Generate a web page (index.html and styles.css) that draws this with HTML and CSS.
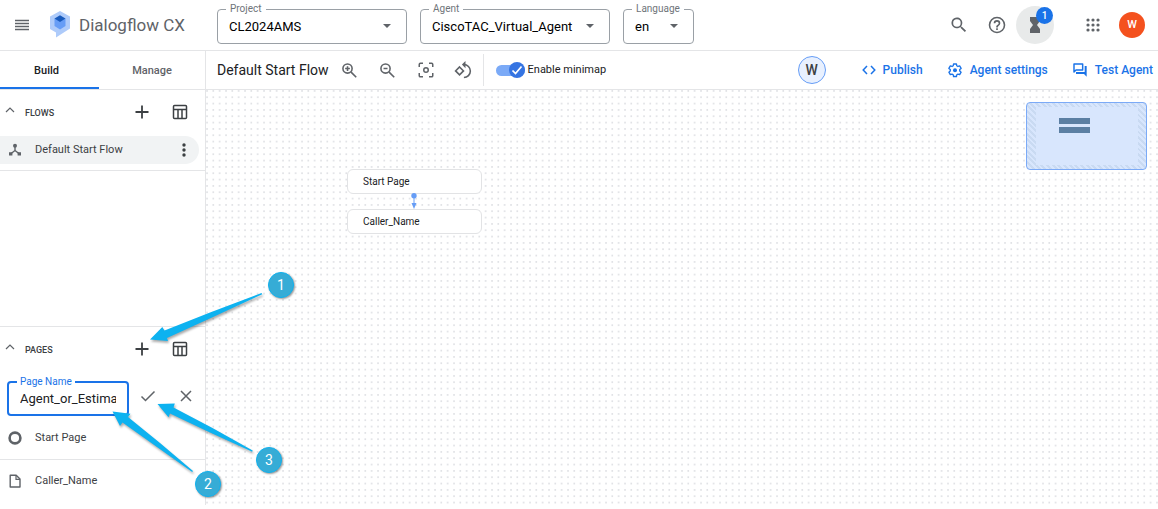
FILE: index.html
```html
<!DOCTYPE html>
<html lang="en">
<head>
<meta charset="utf-8">
<title>Dialogflow CX</title>
<link rel="stylesheet" href="styles.css">
</head>
<body>
<header class="topbar">
  <button class="icon-btn menu-btn" aria-label="Main menu"><svg width="16" height="12" viewBox="0 0 16 12"><path d="M1 1.500h14M1 4.500h14M1 7.500h14M1 10.500h14" stroke="#5f6368" stroke-width="1.400"/></svg></button>
  <a class="brand" href="#">
    <svg width="22" height="28" viewBox="0 0 22 28"><path d="M11 0 21 5.500V17.500L7 26.500V21.500L1 18V5.500Z" fill="#aecbfa"/><path d="M11 9 16.500 7.500V15L11 18.500 5.500 15V7.500Z" fill="#669df6"/><path d="M11 4.200 16.500 7.500 11 11 5.500 7.500Z" fill="#185abc"/></svg>
    <span>Dialogflow CX</span>
  </a>
  <div class="selectors">
    <fieldset class="field project"><legend><label for="project">Project</label></legend>
      <select id="project"><option>CL2024AMS</option></select><svg class="caret" width="8" height="4" viewBox="0 0 8 4"><path d="M0 0h8L4 4z"/></svg></fieldset>
    <fieldset class="field agent"><legend><label for="agent">Agent</label></legend>
      <select id="agent"><option>CiscoTAC_Virtual_Agent</option></select><svg class="caret" width="8" height="4" viewBox="0 0 8 4"><path d="M0 0h8L4 4z"/></svg></fieldset>
    <fieldset class="field language"><legend><label for="language">Language</label></legend>
      <select id="language"><option>en</option></select><svg class="caret" width="8" height="4" viewBox="0 0 8 4"><path d="M0 0h8L4 4z"/></svg></fieldset>
  </div>
  <div class="top-actions">
    <button class="icon-btn" aria-label="Search"><svg width="20" height="20" viewBox="0 0 24 24"><path fill="#5f6368" d="M15.500 14h-.8l-.3-.3A6.500 6.500 0 1 0 13.700 14.400l.3.3v.8l5 5 1.500-1.500-5-5zm-6 0a4.500 4.500 0 1 1 0-9 4.500 4.500 0 0 1 0 9z"/></svg></button>
    <button class="icon-btn" aria-label="Help"><svg width="20" height="20" viewBox="0 0 24 24"><circle cx="12" cy="12" r="9" fill="none" stroke="#5f6368" stroke-width="1.900"/><path fill="#5f6368" d="M11 16h2v2h-2zM12 6a4 4 0 0 0-4 4h2a2 2 0 1 1 4 0c0 2-3 1.750-3 5h2c0-2.250 3-2.500 3-5a4 4 0 0 0-4-4z"/></svg></button>
    <button class="icon-btn jobs" aria-label="Operations"><svg width="12" height="18" viewBox="0 0 12 18"><path fill="#5f6368" d="M1 1h10v4L8 9l3 4v4H1v-4l3-4-3-4z"/></svg><span class="count">1</span></button>
    <button class="icon-btn apps" aria-label="Google apps"><svg width="14" height="14" viewBox="0 0 14 14"><path d="M2 2h.01M7 2h.01M12 2h.01M2 7h.01M7 7h.01M12 7h.01M2 12h.01M7 12h.01M12 12h.01" stroke="#5f6368" stroke-width="3.200" stroke-linecap="round"/></svg></button>
    <button class="account" aria-label="Account">W</button>
  </div>
</header>

<div class="workspace">
  <aside class="sidebar">
    <nav class="tabs"><a class="tab active" href="#">Build</a><a class="tab" href="#">Manage</a></nav>
    <section class="flows">
      <div class="section-head">
        <button class="icon-btn chevron" aria-label="Collapse flows"><svg width="10" height="6" viewBox="0 0 10 6"><path d="M1 5l4-4 4 4" fill="none" stroke="#5f6368" stroke-width="1.200"/></svg></button>
        <h2>FLOWS</h2>
        <button class="icon-btn" aria-label="Create flow"><svg width="14" height="14" viewBox="0 0 14 14"><path d="M7 .5v13M.5 7h13" stroke="#3c4043" stroke-width="1.800"/></svg></button>
        <button class="icon-btn" aria-label="Flow table"><svg width="16" height="16" viewBox="0 0 16 16"><rect x="1.500" y="1.500" width="13" height="13" rx="1" fill="none" stroke="#3c4043" stroke-width="1.500"/><path d="M1 5.500h14M6 5.500v9M10 5.500v9" stroke="#3c4043" stroke-width="1.500"/></svg></button>
      </div>
      <div class="row selected">
        <svg class="row-icon" width="14" height="14" viewBox="0 0 14 14"><path d="M7 3v4.500L2.500 11M7 7.500l4.500 3.500" fill="none" stroke="#5f6368" stroke-width="1.400"/><circle cx="7" cy="2.700" r="2" fill="#5f6368"/><path d="M1 9.200h3.400v3.400H1zM9.600 9.200H13v3.400H9.600z" fill="#5f6368"/></svg>
        <a href="#">Default Start Flow</a>
        <button class="icon-btn" aria-label="More"><svg width="4" height="14" viewBox="0 0 4 14"><g fill="#3c4043"><circle cx="2" cy="2" r="1.700"/><circle cx="2" cy="7" r="1.700"/><circle cx="2" cy="12" r="1.700"/></g></svg></button>
      </div>
    </section>
    <section class="pages">
      <div class="section-head">
        <button class="icon-btn chevron" aria-label="Collapse pages"><svg width="10" height="6" viewBox="0 0 10 6"><path d="M1 5l4-4 4 4" fill="none" stroke="#5f6368" stroke-width="1.200"/></svg></button>
        <h2>PAGES</h2>
        <button class="icon-btn" aria-label="Create page"><svg width="14" height="14" viewBox="0 0 14 14"><path d="M7 .5v13M.5 7h13" stroke="#3c4043" stroke-width="1.800"/></svg></button>
        <button class="icon-btn" aria-label="Page table"><svg width="16" height="16" viewBox="0 0 16 16"><rect x="1.500" y="1.500" width="13" height="13" rx="1" fill="none" stroke="#3c4043" stroke-width="1.500"/><path d="M1 5.500h14M6 5.500v9M10 5.500v9" stroke="#3c4043" stroke-width="1.500"/></svg></button>
      </div>
      <form class="new-page">
        <fieldset class="field page-name"><legend><label for="page-name">Page Name</label></legend><input id="page-name" type="text" value="Agent_or_Estimate"></fieldset>
        <button type="button" class="icon-btn" aria-label="Save"><svg width="16" height="12" viewBox="0 0 16 12"><path d="M1.500 6.500l4 4L14.500 1.500" fill="none" stroke="#5f6368" stroke-width="1.500"/></svg></button>
        <button type="button" class="icon-btn" aria-label="Cancel"><svg width="12" height="12" viewBox="0 0 12 12"><path d="M1 1l10 10M11 1L1 11" stroke="#5f6368" stroke-width="1.500"/></svg></button>
      </form>
      <div class="row start">
        <svg class="row-icon" width="14" height="14" viewBox="0 0 14 14"><circle cx="7" cy="7" r="5.400" fill="none" stroke="#5f6368" stroke-width="2.600"/></svg>
        <a href="#">Start Page</a>
      </div>
      <div class="row">
        <svg class="row-icon" width="14" height="14" viewBox="0 0 14 14"><path d="M2.200 1.200h6L12 5v8H2.200z" fill="none" stroke="#5f6368" stroke-width="1.400" stroke-linejoin="round"/><path d="M8 1v4.300h4" fill="none" stroke="#5f6368" stroke-width="1.200"/></svg>
        <a href="#">Caller_Name</a>
      </div>
    </section>
  </aside>

  <main class="main">
    <div class="toolbar">
      <h1>Default Start Flow</h1>
      <div class="view-tools">
        <button class="icon-btn" aria-label="Zoom in"><svg width="19" height="19" viewBox="0 0 24 24"><circle cx="9.500" cy="9.500" r="5.800" fill="none" stroke="#5f6368" stroke-width="2"/><path d="M14 14l6.500 6.500M9.500 6.500v6M6.500 9.500h6" stroke="#5f6368" stroke-width="2"/></svg></button>
        <button class="icon-btn" aria-label="Zoom out"><svg width="19" height="19" viewBox="0 0 24 24"><circle cx="9.500" cy="9.500" r="5.800" fill="none" stroke="#5f6368" stroke-width="2"/><path d="M14 14l6.500 6.500M7 9.500h5" stroke="#5f6368" stroke-width="2"/></svg></button>
        <button class="icon-btn" aria-label="Center view"><svg width="18" height="18" viewBox="0 0 24 24"><g fill="none" stroke="#5f6368" stroke-width="2"><circle cx="12" cy="12" r="3"/><path d="M3 8V4.500Q3 3 4.500 3H8M16 3h3.500Q21 3 21 4.500V8M21 16v3.500q0 1.500-1.500 1.500H16M8 21H4.500Q3 21 3 19.500V16"/></g></svg></button>
        <button class="icon-btn" aria-label="Reset layout"><svg width="19" height="19" viewBox="0 0 24 24"><g fill="none" stroke="#5f6368" stroke-width="2"><path d="M7 7.500l5 5-5 5-5-5z"/><path d="M12.500 4.500a8 8 0 1 1 0 16.300"/></g><path d="M14.500 0v9L10 4.500z" fill="#5f6368"/></svg></button>
      </div>
      <label class="toggle"><input type="checkbox" role="switch" checked><span class="track"><span class="knob"><svg width="12" height="12" viewBox="0 0 12 12"><path d="M1.500 6.500l3 3 6-7" fill="none" stroke="#fff" stroke-width="1.700"/></svg></span></span>Enable minimap</label>
      <div class="agent-actions">
        <button class="presence" aria-label="Collaborator">W</button>
        <button class="action publish"><svg width="14" height="16" viewBox="0 0 14 16"><path d="M5 4L1.200 8 5 12M9 4l3.800 4L9 12" fill="none" stroke="#1a73e8" stroke-width="1.500"/></svg>Publish</button>
        <button class="action"><svg width="16" height="16" viewBox="0 0 24 24"><path d="M9.800 3h4.400l.5 2.700 1.700 1 2.600-.9 2.200 3.800-2.100 1.800v2l2.100 1.800-2.200 3.800-2.600-.9-1.700 1-.5 2.700H9.800l-.5-2.700-1.700-1-2.600.9-2.200-3.800 2.100-1.800v-2L2.800 9.600 5 5.800l2.600.9 1.700-1z" fill="none" stroke="#1a73e8" stroke-width="2" stroke-linejoin="round"/><circle cx="12" cy="12.300" r="3" fill="#1a73e8"/></svg>Agent settings</button>
        <button class="action"><svg width="16" height="16" viewBox="0 0 24 24"><path d="M3 3h13v9H6l-3 3z" fill="none" stroke="#1a73e8" stroke-width="2.200" stroke-linejoin="round"/><path d="M19 6h3v16l-4-4H6v-3h13z" fill="#1a73e8"/></svg>Test Agent</button>
      </div>
    </div>
    <div class="canvas">
      <svg class="grid" width="100%" height="100%"><defs><pattern id="dots" width="6.333" height="6.333" patternUnits="userSpaceOnUse"><circle cx="1" cy="1" r=".9" fill="#dadce0"/></pattern></defs><rect width="100%" height="100%" fill="url(#dots)"/></svg>
      <div class="node node-start">Start Page</div>
      <svg class="link" width="8" height="16" viewBox="0 0 8 16"><circle cx="4" cy="2.800" r="2.700" fill="#669df6"/><path d="M4 3v8" stroke="#669df6" stroke-width="1"/><path d="M1.500 10h5L4 16z" fill="#669df6"/></svg>
      <div class="node node-caller">Caller_Name</div>
      <div class="minimap"><span class="mini-node"></span><span class="mini-node"></span></div>
    </div>
  </main>
</div>

<svg class="arrows" width="310" height="500" viewBox="0 0 310 500">
  <g fill="#0db2f0">
    <path d="M150 339.500 162.300 327 164.500 330.500 210 312.500 261.500 293 262.300 294.200 212 317.500 167 338 168 341Z"/>
    <path d="M112.500 411.500 130.500 413.800 128 417 160 443 193 471 192.200 472 157 447 122.500 422.500 120 426Z"/>
    <path d="M157.500 404 174.800 403.500 173.500 407.500 212 427.800 252.700 450.500 252.200 451.700 210 432.500 170 413.500 168.500 417.300Z"/>
  </g>
</svg>
<span class="step step-1">1</span>
<span class="step step-2">2</span>
<span class="step step-3">3</span>
</body>
</html>
```
FILE: styles.css
```css
* { box-sizing: border-box; }

body {
  margin: 0;
  min-height: 100vh;
  padding-bottom: 4px;
  display: flex;
  flex-direction: column;
  position: relative;
  overflow: hidden;
  background: #fff;
  color: #3c4043;
  font-family: Roboto, "Liberation Sans", sans-serif;
  font-size: 11px;
  line-height: 16px;
}

button, select, input { font: inherit; color: inherit; }
button { padding: 0; border: 0; background: none; cursor: pointer; }
a { color: inherit; text-decoration: none; }
h1, h2 { margin: 0; font-weight: 400; }
svg { display: block; flex: none; }

.icon-btn {
  width: 38px;
  height: 38px;
  flex: none;
  display: flex;
  align-items: center;
  justify-content: center;
}

.topbar {
  height: 51px;
  flex: none;
  display: flex;
  align-items: center;
  border-bottom: 1px solid #e4e5e7;
}
.menu-btn { margin-left: 3px; }
.brand {
  width: 176px;
  flex: none;
  padding-left: 8px;
  display: flex;
  align-items: center;
  gap: 8px;
  color: #5f6368;
  font-size: 17px;
  line-height: 24px;
}

.selectors { display: flex; gap: 13px; flex: none; }
.field {
  min-width: 0;
  height: 40px;
  margin: 0;
  padding: 0 8px;
  border: 1px solid #9aa0a6;
  border-radius: 4px;
  position: relative;
}
.field legend {
  height: 12px;
  padding: 0 4px;
  color: #6f7479;
  font-size: 10px;
  line-height: 12px;
}
.field legend label { display: block; }
.field select, .field input {
  display: block;
  width: 100%;
  height: 22px;
  padding: 0 4px;
  border: 0;
  outline: 0;
  background: none;
  appearance: none;
  color: #202124;
  font-size: 13px;
}
.field select { height: 24px; padding: 0 3px; color: #000; }
.topbar .field { height: 41px; margin-bottom: 3px; }
.caret { position: absolute; right: 15px; top: 9px; fill: #5f6368; pointer-events: none; }
.project, .agent { width: 190px; }
.language { width: 71px; }

.top-actions { margin-left: auto; padding-right: 13px; display: flex; align-items: center; }
.jobs { position: relative; border-radius: 50%; background: #e8eaea; }
.count {
  position: absolute;
  top: 1px;
  right: 1px;
  width: 17px;
  height: 17px;
  border-radius: 50%;
  background: #1a73e8;
  color: #fff;
  font-size: 10px;
  font-weight: 500;
  line-height: 17px;
}
.apps { margin-left: 20px; }
.account {
  width: 26px;
  height: 26px;
  margin-left: 7px;
  border-radius: 50%;
  background: #f4511e;
  color: #fff;
  font-weight: 500;
}

.workspace { flex: 1; display: flex; min-height: 0; }
.sidebar {
  width: 206px;
  flex: none;
  display: flex;
  flex-direction: column;
  border-right: 1px solid #e4e5e7;
}
.tabs { height: 39px; display: flex; border-bottom: 1px solid #e4e5e7; }
.tab {
  flex: 1;
  display: flex;
  align-items: center;
  justify-content: center;
  padding-top: 2px;
  color: #5f6368;
  font-weight: 500;
}
.tab.active { flex: none; width: 99px; padding: 3px 6px 0 0; border-bottom: 2px solid #1a73e8; color: #202124; }

.section-head { height: 45px; display: flex; align-items: center; padding: 0 6px 2px 0; }
.section-head .chevron { width: 20px; height: 20px; padding-bottom: 3px; }
.section-head h2 { flex: 1; padding: 3px 0 0 5px; font-size: 9px; font-weight: 500; }

.row { height: 42px; display: flex; align-items: center; padding-left: 8px; gap: 13px; }
.row a { flex: 1; }
.flows { flex: 1; }
.selected {
  height: 28px;
  margin-top: 1px;
  margin-right: 6px;
  padding-right: 4px;
  border-radius: 0 14px 14px 0;
  background: #f1f3f4;
}
.selected .icon-btn { width: 22px; height: 28px; }
.flows::after { content: ""; display: block; margin-top: 6px; border-top: 1px solid #e4e5e7; }
.pages { border-top: 1px solid #e4e5e7; padding-bottom: 3px; }
.new-page { display: flex; align-items: center; padding: 4px 0 0 7px; }
.page-name { width: 122px; border: 2px solid #1a73e8; }
.page-name legend { color: #1a73e8; padding: 0 3px; }
.page-name input { height: 20px; padding: 0 3px; }
.start { height: 44px; border-bottom: 1px solid #e4e5e7; }

.main { flex: 1; min-width: 0; display: flex; flex-direction: column; }
.toolbar { height: 39px; flex: none; display: flex; align-items: center; border-bottom: 1px solid #e4e5e7; }
.toolbar h1 { margin-left: 11px; padding-right: 2px; font-size: 14px; color: #202124; white-space: nowrap; }
.view-tools { display: flex; height: 32px; align-items: center; border-right: 1px solid #e4e5e7; margin-right: 12px; }
.toggle { display: flex; align-items: center; gap: 3px; color: #202124; white-space: nowrap; position: relative; }
.toggle input { position: absolute; opacity: 0; margin: 0; }
.track { width: 29px; height: 11px; border-radius: 6px; background: #7baaf7; display: flex; align-items: center; justify-content: flex-end; }
.knob { width: 16px; height: 16px; flex: none; border-radius: 50%; background: #3574e2; display: flex; align-items: center; justify-content: center; }
.agent-actions { margin-left: auto; padding-right: 5px; display: flex; align-items: center; gap: 24px; }
.presence {
  width: 28px;
  height: 28px;
  border: 1px solid #669df6;
  border-radius: 50%;
  background: #e8f0fe;
  font-size: 14px;
  font-weight: 500;
}
.action { display: flex; align-items: center; gap: 7px; color: #1a73e8; font-size: 12px; font-weight: 500; white-space: nowrap; }
.publish { margin-left: 12px; }

.canvas { flex: 1; position: relative; overflow: hidden; }
.grid { position: absolute; inset: 0; }
.node {
  position: absolute;
  left: 141px;
  width: 135px;
  height: 25px;
  padding-left: 15px;
  border: 1px solid #e2e3e5;
  border-radius: 6px;
  background: #fff;
  color: #202124;
  font-size: 10px;
  line-height: 23px;
}
.node-start { top: 79px; }
.node-caller { top: 119px; }
.link { position: absolute; left: 204px; top: 103px; }
.minimap {
  position: absolute;
  top: 12px;
  right: 11px;
  width: 121px;
  height: 68px;
  padding: 15px 0 0 32px;
  border: 1px solid #7baaf7;
  border-radius: 4px;
  background:
    linear-gradient(#d8e6fd, #d8e6fd) center / 102px 58px no-repeat,
    repeating-linear-gradient(45deg, #c9daf2 0 2px, #d8e6fd 2px 4px);
}
.mini-node { display: block; width: 31px; height: 6px; margin-bottom: 3px; background: #5b7fa3; }

.arrows { position: absolute; left: 0; top: 0; pointer-events: none; filter: drop-shadow(1px 2px 1px #0005); }
.step {
  position: absolute;
  width: 26px;
  height: 26px;
  border: 1px solid #0db2f0;
  border-radius: 50%;
  background: #36acd6;
  box-shadow: 1px 1px 2px #0006;
  color: #fff;
  font-size: 14px;
  line-height: 24px;
  text-align: center;
}
.step-1 { left: 268px; top: 272px; }
.step-2 { left: 195px; top: 471px; }
.step-3 { left: 256px; top: 447px; }
```
